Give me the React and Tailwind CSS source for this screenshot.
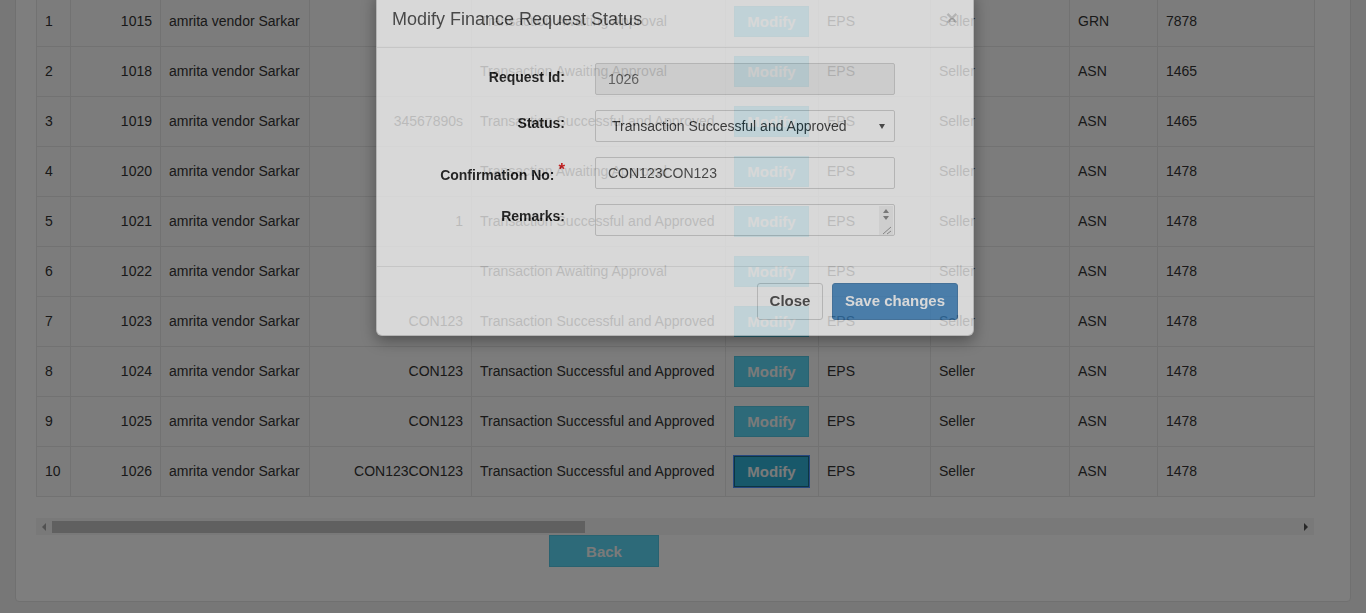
import React from "react";

const rows = [
  [1, 1015, "", "Transaction Awaiting Approval", "GRN", "7878"],
  [2, 1018, "", "Transaction Awaiting Approval", "ASN", "1465"],
  [3, 1019, "34567890s", "Transaction Successful and Approved", "ASN", "1465"],
  [4, 1020, "", "Transaction Awaiting Approval", "ASN", "1478"],
  [5, 1021, "1", "Transaction Successful and Approved", "ASN", "1478"],
  [6, 1022, "", "Transaction Awaiting Approval", "ASN", "1478"],
  [7, 1023, "CON123", "Transaction Successful and Approved", "ASN", "1478"],
  [8, 1024, "CON123", "Transaction Successful and Approved", "ASN", "1478"],
  [9, 1025, "CON123", "Transaction Successful and Approved", "ASN", "1478"],
  [10, 1026, "CON123CON123", "Transaction Successful and Approved", "ASN", "1478"],
];

const widths = [34, 90, 149, 162, 254, 93, 112, 139, 88, 157];

function FinanceTable() {
  return (
    <table className="table-fixed border-collapse w-[1278px] bg-[#f9f9f9] text-[14px] text-[#333]">
      <colgroup>
        {widths.map((w, i) => (
          <col key={i} style={{ width: w }} />
        ))}
      </colgroup>
      <tbody>
        {rows.map((r, i) => (
          <tr key={i} className="h-[50px]">
            <td className="border border-[#e4e4e4] px-2">{r[0]}</td>
            <td className="border border-[#e4e4e4] px-2 text-right">{r[1]}</td>
            <td className="border border-[#e4e4e4] px-2 whitespace-nowrap">amrita vendor Sarkar</td>
            <td className="border border-[#e4e4e4] px-2 text-right">{r[2]}</td>
            <td className="border border-[#e4e4e4] px-2 whitespace-nowrap">{r[3]}</td>
            <td className="border border-[#e4e4e4] px-2">
              {i === 9 ? (
                <button className="w-[75px] h-[31px] bg-[#31b0d5] border border-[#1b6d85] ring-1 ring-[#4d90fe] text-[#f4f4f4] font-bold text-[15px] pt-[2px]">
                  Modify
                </button>
              ) : (
                <button className="w-[75px] h-[31px] bg-[#5bd5f3] border border-[#52c4e0] text-[#f4f4f4] font-bold text-[15px] pt-[2px]">
                  Modify
                </button>
              )}
            </td>
            <td className="border border-[#e4e4e4] px-2">EPS</td>
            <td className="border border-[#e4e4e4] px-2">Seller</td>
            <td className="border border-[#e4e4e4] px-2">{r[4]}</td>
            <td className="border border-[#e4e4e4] px-2">{r[5]}</td>
          </tr>
        ))}
      </tbody>
    </table>
  );
}

function ScrollBar() {
  return (
    <div className="mt-[21px] w-[1278px] h-[17px] bg-[#f3f3f3] flex items-center">
      <div className="w-[16px] h-[17px] flex items-center justify-center">
        <svg width="6" height="8" viewBox="0 0 6 8">
          <path d="M5 0 L1 4 L5 8 Z" fill="#a3a3a3" />
        </svg>
      </div>
      <div className="w-[533px] h-[12px] bg-[#c1c1c1]" />
      <div className="flex-1" />
      <div className="w-[16px] h-[17px] flex items-center justify-center">
        <svg width="6" height="8" viewBox="0 0 6 8">
          <path d="M1 0 L5 4 L1 8 Z" fill="#505050" />
        </svg>
      </div>
    </div>
  );
}

function Modal() {
  return (
    <div className="absolute left-[376px] top-[-9px] w-[598px] opacity-70 bg-white border border-black/20 rounded-[6px] shadow-[0_5px_15px_rgba(0,0,0,0.5)]">
      <div className="p-[15px] border-b border-[#e5e5e5] flex justify-between items-start">
        <h4 className="text-[18px] leading-[25px] text-[#333]">Modify Finance Request Status</h4>
        <span className="text-[21px] font-bold leading-[21px] text-black opacity-20">×</span>
      </div>

      <div className="p-[15px] text-[14px]">
        <div className="flex mb-[15px]">
          <label className="w-[173px] text-right font-bold text-black leading-[20px] pt-[4px]">Request Id:</label>
          <div className="ml-[30px] w-[300px] h-[32px] border border-[#ccc] bg-[#eee] rounded-[2px] px-3 flex items-center text-[#555]">
            1026
          </div>
        </div>
        <div className="flex mb-[15px]">
          <label className="w-[173px] text-right font-bold text-black leading-[20px] pt-[3px]">Status:</label>
          <div className="ml-[30px] w-[300px] h-[32px] border border-[#ccc] bg-white rounded-[2px] pl-4 pr-[9px] flex items-center justify-between text-[#222]">
            <span>Transaction Successful and Approved</span>
            <svg width="6" height="5" viewBox="0 0 6 5">
              <path d="M0 0 L6 0 L3 5 Z" fill="#333" />
            </svg>
          </div>
        </div>
        <div className="flex mb-[15px]">
          <label className="w-[173px] text-right font-bold text-black leading-[20px] pt-[8px] whitespace-nowrap">
            Confirmation No: <span className="relative -top-[5px] text-[#e00000] text-[17px]">*</span>
          </label>
          <div className="ml-[30px] w-[300px] h-[32px] border border-[#ccc] bg-white rounded-[2px] px-3 flex items-center text-[#333]">
            CON123CON123
          </div>
        </div>
        <div className="flex mb-[15px]">
          <label className="w-[173px] text-right font-bold text-black leading-[20px] pt-[2px]">Remarks:</label>
          <div className="ml-[30px] w-[300px] h-[32px] border border-[#ccc] bg-white rounded-[2px] relative">
            <svg className="absolute right-[1px] top-[1px]" width="14" height="29" viewBox="0 0 14 29">
              <rect x="0" y="0" width="14" height="29" fill="#f1f1f1" />
              <path d="M4 7 L7 3 L10 7 Z" fill="#777" />
              <path d="M4 10 L10 10 L7 14 Z" fill="#777" />
              <path d="M12 21 L4 28 M12 25 L8 28" stroke="#888" strokeWidth="1" />
            </svg>
          </div>
        </div>
      </div>

      <div className="px-[15px] pt-[16px] pb-[15px] border-t border-[#e5e5e5] flex justify-end gap-[9px]">
        <button className="h-[37px] w-[66px] border border-[#ccc] bg-white rounded-[3px] text-[#333] font-bold text-[15px]">
          Close
        </button>
        <button className="h-[37px] w-[126px] border border-[#2e6da4] bg-[#357ebd] rounded-[3px] text-white font-bold text-[15px]">
          Save changes
        </button>
      </div>
    </div>
  );
}

export default function App() {
  return (
    <div className="relative h-[613px] w-[1366px] overflow-hidden bg-[#eeeeee] font-['Liberation_Sans',Arial,sans-serif]">
      <div className="mx-[15px] mt-[-25px] bg-[#fcfcfc] border border-[#e0e0e0] rounded-[4px] px-[20px] pt-[20px] pb-[34px]">
        <FinanceTable />
        <ScrollBar />
        <button className="ml-[513px] w-[110px] h-[32px] bg-[#5bd5f3] border border-[#52c4e0] text-[#f4f4f4] font-bold text-[15px] pt-[2px]">
          Back
        </button>
      </div>
      <div className="fixed inset-0 bg-black/50" />
      <Modal />
    </div>
  );
}
